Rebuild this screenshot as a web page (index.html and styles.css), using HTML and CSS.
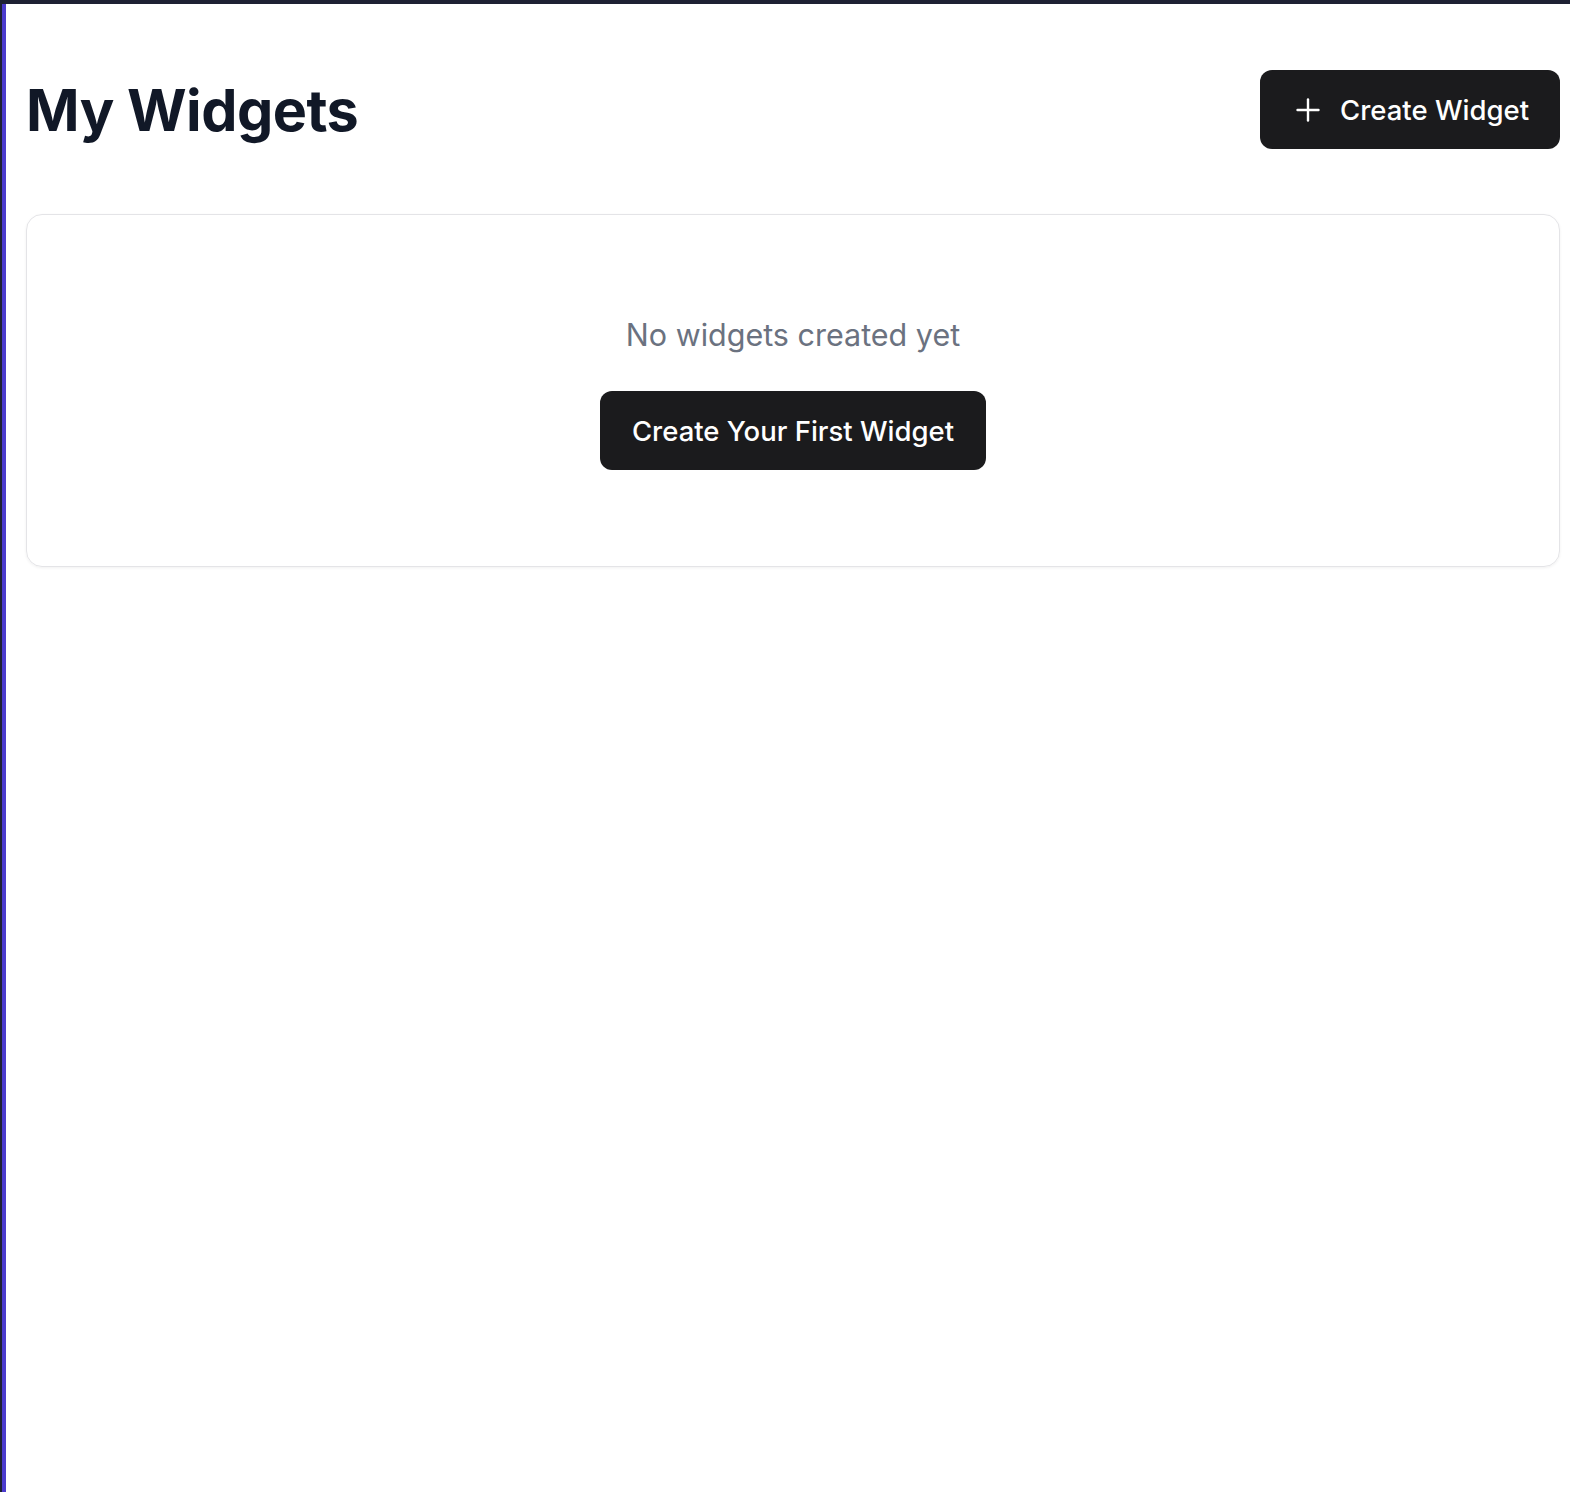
FILE: index.html
```html
<!DOCTYPE html>
<html lang="en">
<head>
<meta charset="utf-8">
<title>My Widgets</title>
<link rel="stylesheet" href="styles.css">
</head>
<body>
<div class="frame">
  <div class="topbar"></div>
  <div class="page">
    <main class="content">
      <header class="header">
        <h1 class="title">My Widgets</h1>
        <button class="btn btn-create" type="button">
          <svg class="icon" viewBox="0 0 24 24" fill="none" stroke="currentColor" stroke-width="2" stroke-linecap="round" stroke-linejoin="round"><path d="M5 12h14"/><path d="M12 5v14"/></svg>
          <span>Create Widget</span>
        </button>
      </header>
      <section class="card">
        <p class="empty">No widgets created yet</p>
        <button class="btn btn-first" type="button">Create Your First Widget</button>
      </section>
    </main>
  </div>
</div>
</body>
</html>
```
FILE: styles.css
```css
html, body {
  margin: 0;
  padding: 0;
  background: #ffffff;
}
body {
  font-family: Inter, "Noto Sans", "Liberation Sans", sans-serif;
  color: #111827;
}
.frame {
  min-height: 1492px;
  border-left: 2px solid #1e2133;
  box-sizing: border-box;
  display: flex;
  flex-direction: column;
}
.topbar {
  height: 4px;
  background: #1e2133;
}
.page {
  flex: 1;
  border-left: 4px solid #4b3bcd;
}
.content {
  padding: 66px 10px 0 20px;
}
.header {
  display: flex;
  align-items: center;
  justify-content: space-between;
  margin-bottom: 65px;
}
.title {
  margin: 0;
  font-size: 57.5px;
  line-height: 72px;
  font-weight: 700;
  color: #111827;
  letter-spacing: -0.5px;
}
.btn {
  display: inline-flex;
  align-items: center;
  justify-content: center;
  white-space: nowrap;
  border: none;
  background: #1b1b1d;
  color: #ffffff;
  font-family: inherit;
  font-weight: 500;
  font-size: 27.5px;
  line-height: 40px;
  height: 79px;
  border-radius: 12px;
  padding: 0 32px;
  cursor: pointer;
}
.btn-create {
  gap: 14px;
  padding: 0 31px 0 30px;
}
.icon {
  width: 36px;
  height: 36px;
  flex: none;
  stroke-width: 1.6;
}
.card {
  border: 1px solid #e4e4e7;
  border-radius: 16px;
  box-shadow: 0 1px 3px rgba(0, 0, 0, 0.06);
  padding: 96px 24px 96px;
  display: flex;
  flex-direction: column;
  align-items: center;
}
.empty {
  margin: 0 0 32px;
  font-size: 30.5px;
  line-height: 48px;
  color: #6b7280;
}
```
